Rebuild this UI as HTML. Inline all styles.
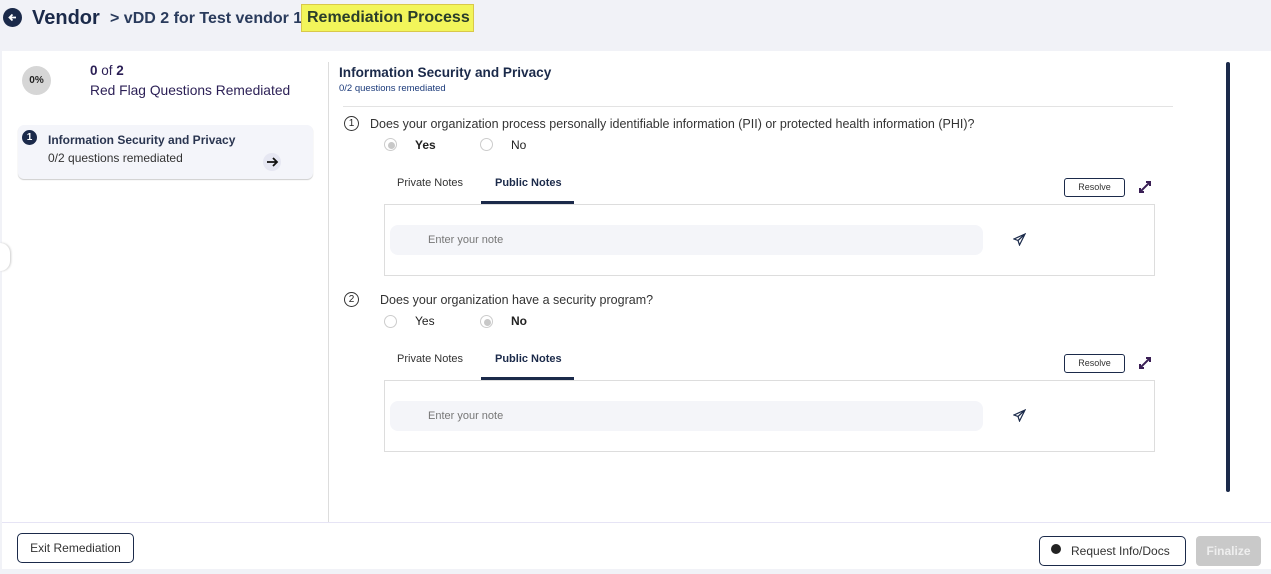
<!DOCTYPE html>
<html><head><style>
*{margin:0;padding:0;box-sizing:border-box}
body{width:1271px;height:574px;background:#f1f2f7;font-family:"Liberation Sans",sans-serif;position:relative;overflow:hidden;color:#222}
.a{position:absolute}
.navy{color:#1b2a4a}
.tab{font-size:11px;color:#333}
.notebox{border:1px solid #ddd;background:#fff}
.inp{background:#f4f5f9;border-radius:8px;color:#777;font-size:11px;padding-left:38px;line-height:30px}
.resolve{border:1px solid #1b2a4a;border-radius:3px;font-size:9px;text-align:center;line-height:16px;color:#333;width:61px;height:19px}
.radio{width:13px;height:13px;border-radius:50%;border:1px solid #ccc;background:#fff}
.radio.on::after{content:"";position:absolute;left:3px;top:3px;width:7px;height:7px;border-radius:50%;background:#c8c8c8}
</style></head><body>
<div class="a" style="left:3px;top:8px;width:19px;height:19px;border-radius:50%;background:#1b2a4a"></div>
<svg class="a" style="left:6px;top:11px" width="13" height="13" viewBox="0 0 13 13"><path d="M10 6.5H3.5M6.5 3.5L3.5 6.5L6.5 9.5" stroke="#fff" stroke-width="1.8" fill="none"/></svg>
<div class="a navy" style="left:32px;top:7px;font-size:20px;font-weight:bold">Vendor</div>
<div class="a navy" style="left:110px;top:10px;font-size:16px;font-weight:bold;color:#2a3b5c">&gt; vDD 2 for Test vendor 1</div>
<div class="a" style="left:301px;top:4px;width:173px;height:28px;background:#f2f55a;border:1px solid #d9c84a;font-size:16px;font-weight:bold;color:#2a3d2a;line-height:26px;padding-left:5px">Remediation Process</div>

<div class="a" style="left:2px;top:51px;width:1269px;height:518px;background:#fff"></div>
<div class="a" style="left:22px;top:66px;width:29px;height:29px;border-radius:50%;background:#d6d6d6;font-size:10px;font-weight:bold;text-align:center;line-height:29px">0%</div>
<div class="a" style="left:90px;top:63px;font-size:13.5px;color:#2b1f55"><b>0</b> of <b>2</b></div>
<div class="a" style="left:90px;top:83px;font-size:13.8px;color:#2b1f55">Red Flag Questions Remediated</div>
<div class="a" style="left:18px;top:125px;width:295px;height:54px;background:#f4f5fa;border-radius:6px;box-shadow:0 1px 1px #ccc"></div>
<div class="a" style="left:22px;top:130px;width:15px;height:15px;border-radius:50%;background:#1b2a4a;color:#fff;font-size:10px;font-weight:bold;text-align:center;line-height:15px">1</div>
<div class="a" style="left:48px;top:133px;font-size:12px;font-weight:bold;color:#2a3550">Information Security and Privacy</div>
<div class="a" style="left:48px;top:151px;font-size:12px;color:#333">0/2 questions remediated</div>
<div class="a" style="left:263px;top:153px;width:18px;height:18px;border-radius:50%;background:#e6e7f2"></div>
<svg class="a" style="left:265px;top:155px" width="14" height="14" viewBox="0 0 14 14"><path d="M2 7H12M8 3L12 7L8 11" stroke="#111" stroke-width="1.8" fill="none"/></svg>
<div class="a" style="left:0;top:243px;width:10px;height:28px;border-radius:0 14px 14px 0;background:#fff;box-shadow:1px 0 2px #ccc"></div>

<div class="a" style="left:328px;top:62px;width:1px;height:460px;background:#ddd"></div>
<div class="a navy" style="left:339px;top:65px;font-size:13.6px;font-weight:bold">Information Security and Privacy</div>
<div class="a" style="left:339px;top:83px;font-size:9.5px;color:#1b3a7a">0/2 questions remediated</div>
<div class="a" style="left:343px;top:106px;width:830px;height:1px;background:#e3e3e3"></div>
<div class="a" style="left:1226px;top:62px;width:4px;height:430px;background:#1b2a4a;border-radius:2px"></div>

<!-- Q1 -->
<div class="a" style="left:344px;top:116px;width:15px;height:15px;border-radius:50%;border:1.3px solid #333;font-size:10px;text-align:center;line-height:13px">1</div>
<div class="a" style="left:370px;top:117px;font-size:12.5px;color:#333">Does your organization process personally identifiable information (PII) or protected health information (PHI)?</div>
<div class="a radio on" style="left:384px;top:138px"></div>
<div class="a" style="left:415px;top:138px;font-size:12px;font-weight:bold">Yes</div>
<div class="a radio" style="left:480px;top:138px"></div>
<div class="a" style="left:511px;top:138px;font-size:12px">No</div>
<div class="a tab" style="left:397px;top:177px">Private Notes</div>
<div class="a tab" style="left:495px;top:177px;font-weight:bold;color:#1b2a4a">Public Notes</div>
<div class="a" style="left:481px;top:201px;width:93px;height:3px;background:#1b2a4a"></div>
<div class="a resolve" style="left:1064px;top:178px">Resolve</div>
<svg class="a" style="left:1137px;top:179px" width="16" height="16" viewBox="0 0 16 16"><path d="M3 13L13 3M9 3H13V7M3 9V13H7" stroke="#3a1f55" stroke-width="2" fill="none"/></svg>
<div class="a notebox" style="left:384px;top:204px;width:771px;height:72px"></div>
<div class="a inp" style="left:390px;top:225px;width:593px;height:30px">Enter your note</div>
<svg class="a" style="left:1013px;top:233px" width="13" height="13" viewBox="0 0 13 13"><path d="M12 1L1 6L5 7.5L6.5 12Z M5 7.5L12 1" stroke="#1b2a4a" stroke-width="1.2" fill="none"/></svg>

<!-- Q2 -->
<div class="a" style="left:344px;top:292px;width:15px;height:15px;border-radius:50%;border:1.3px solid #333;font-size:10px;text-align:center;line-height:13px">2</div>
<div class="a" style="left:380px;top:293px;font-size:12.5px;color:#333">Does your organization have a security program?</div>
<div class="a radio" style="left:384px;top:315px"></div>
<div class="a" style="left:415px;top:314px;font-size:12px">Yes</div>
<div class="a radio on" style="left:480px;top:315px"></div>
<div class="a" style="left:511px;top:314px;font-size:12px;font-weight:bold">No</div>
<div class="a tab" style="left:397px;top:353px">Private Notes</div>
<div class="a tab" style="left:495px;top:353px;font-weight:bold;color:#1b2a4a">Public Notes</div>
<div class="a" style="left:481px;top:377px;width:93px;height:3px;background:#1b2a4a"></div>
<div class="a resolve" style="left:1064px;top:354px">Resolve</div>
<svg class="a" style="left:1137px;top:355px" width="16" height="16" viewBox="0 0 16 16"><path d="M3 13L13 3M9 3H13V7M3 9V13H7" stroke="#3a1f55" stroke-width="2" fill="none"/></svg>
<div class="a notebox" style="left:384px;top:380px;width:771px;height:72px"></div>
<div class="a inp" style="left:390px;top:401px;width:593px;height:30px">Enter your note</div>
<svg class="a" style="left:1013px;top:409px" width="13" height="13" viewBox="0 0 13 13"><path d="M12 1L1 6L5 7.5L6.5 12Z M5 7.5L12 1" stroke="#1b2a4a" stroke-width="1.2" fill="none"/></svg>

<!-- footer -->
<div class="a" style="left:2px;top:522px;width:1269px;height:1px;background:#e6e4f5"></div>
<div class="a" style="left:17px;top:533px;width:117px;height:30px;border:1px solid #1b2a4a;border-radius:5px;font-size:12px;text-align:center;line-height:28px;color:#333">Exit Remediation</div>
<div class="a" style="left:1039px;top:536px;width:147px;height:30px;border:1px solid #1b2a4a;border-radius:5px;font-size:12px;line-height:28px;color:#333;padding-left:31px">Request Info/Docs</div>
<div class="a" style="left:1051px;top:544px;width:10px;height:10px;border-radius:50%;background:#222"></div>
<div class="a" style="left:1196px;top:536px;width:65px;height:30px;background:#c9c9c9;border-radius:4px;font-size:12px;font-weight:bold;color:#eee;text-align:center;line-height:30px">Finalize</div>
</body></html>
